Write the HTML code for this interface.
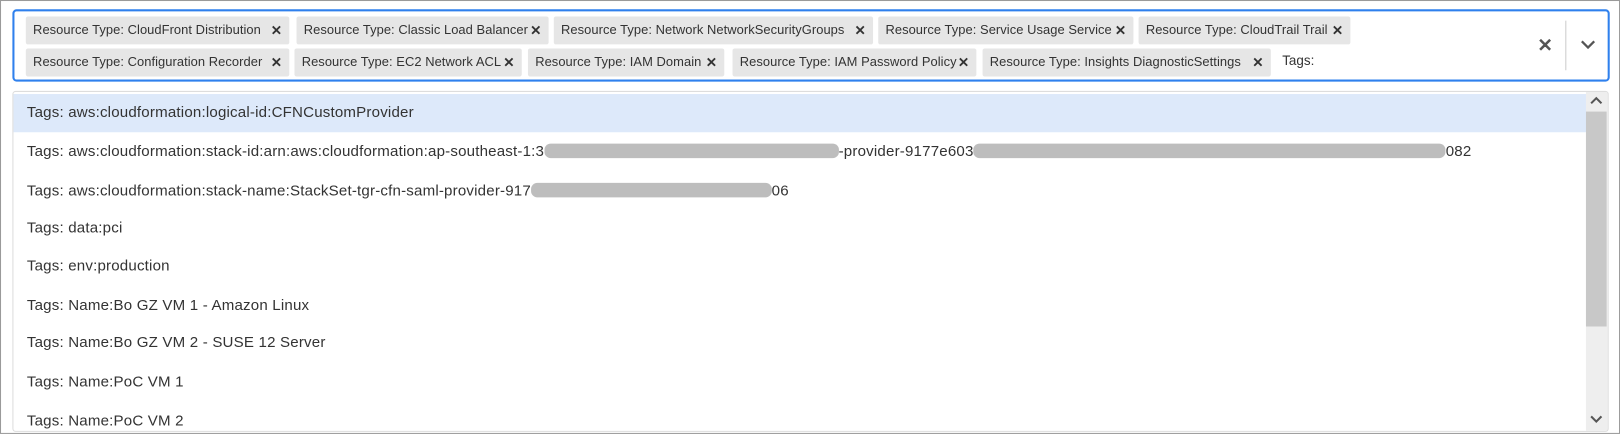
<!DOCTYPE html>
<html><head><style>
*{box-sizing:border-box;margin:0;padding:0}
body{width:1620px;height:434px;background:#fff;font-family:"Liberation Sans",sans-serif;position:relative;overflow:hidden}
.wrap{position:absolute;left:0;top:0;width:1568px;height:420px;transform:scale(1.0332);transform-origin:0 0;border:1px solid #9a9a9a}
.box{position:absolute;left:11px;top:8px;width:1546px;height:70px;border:2px solid #2f80ed;border-radius:4px}
.chip{position:absolute;height:27px;background:#e6e6e6;border-radius:2px;font-size:12.5px;letter-spacing:0.05px;color:#333;line-height:27px;padding-left:7px;white-space:nowrap}
.chip b{position:absolute;right:7px;top:0;font-size:13px;color:#333}
.tagl{position:absolute;left:1240px;top:50px;font-size:13px;color:#333}
.clr{position:absolute;left:1487px;top:33px;font-size:18px;color:#555;font-weight:bold}
.sep{position:absolute;left:1514px;top:19px;width:1px;height:48px;background:#ccc}
.list{position:absolute;left:11px;top:87px;width:1545px;height:330px;border:1px solid #ddd;border-radius:3px;overflow:hidden}
.it{position:absolute;left:0;width:1524px;height:37px;font-size:14.6px;letter-spacing:0.18px;color:#333;line-height:37px;padding-left:13px;white-space:nowrap}
.hl{background:#dde9fa}
.sb{position:absolute;right:0;top:0;width:21px;height:100%;background:#eee}
.th{position:absolute;left:0;top:19px;width:20px;height:208px;background:#c8c8c8}
.bl{display:inline-block;height:14px;background:#bdbdbd;border-radius:6px;vertical-align:-2px}
</style></head><body>
<div class="wrap">
<div class="box">
<div class="chip" style="left:11px;top:5px;width:255px">Resource Type: CloudFront Distribution<b>✕</b></div>
<div class="chip" style="left:273px;top:5px;width:244px">Resource Type: Classic Load Balancer<b>✕</b></div>
<div class="chip" style="left:522px;top:5px;width:309px">Resource Type: Network NetworkSecurityGroups<b>✕</b></div>
<div class="chip" style="left:836px;top:5px;width:247px">Resource Type: Service Usage Service<b>✕</b></div>
<div class="chip" style="left:1088px;top:5px;width:205px">Resource Type: CloudTrail Trail<b>✕</b></div>
<div class="chip" style="left:11px;top:36px;width:255px">Resource Type: Configuration Recorder<b>✕</b></div>
<div class="chip" style="left:271px;top:36px;width:220px">Resource Type: EC2 Network ACL<b>✕</b></div>
<div class="chip" style="left:497px;top:36px;width:190px">Resource Type: IAM Domain<b>✕</b></div>
<div class="chip" style="left:695px;top:36px;width:236px">Resource Type: IAM Password Policy<b>✕</b></div>
<div class="chip" style="left:937px;top:36px;width:279px">Resource Type: Insights DiagnosticSettings<b>✕</b></div>
</div>
<div class="tagl">Tags:</div>
<div class="clr">✕</div>
<div class="sep"></div>
<svg style="position:absolute;left:1528px;top:37px" width="16" height="10"><path d="M2 2 L8 8 L14 2" stroke="#555" stroke-width="2.2" fill="none"/></svg>
<div class="list">
<div class="it hl" style="top:2px">Tags: aws:cloudformation:logical-id:CFNCustomProvider</div>
<div class="it" style="top:40px">Tags: aws:cloudformation:stack-id:arn:aws:cloudformation:ap-southeast-1:3<span class="bl" style="width:285px"></span>-provider-9177e603<span class="bl" style="width:457px"></span>082</div>
<div class="it" style="top:78px">Tags: aws:cloudformation:stack-name:StackSet-tgr-cfn-saml-provider-917<span class="bl" style="width:233px"></span>06</div>
<div class="it" style="top:114px">Tags: data:pci</div>
<div class="it" style="top:151px">Tags: env:production</div>
<div class="it" style="top:189px">Tags: Name:Bo GZ VM 1 - Amazon Linux</div>
<div class="it" style="top:225px">Tags: Name:Bo GZ VM 2 - SUSE 12 Server</div>
<div class="it" style="top:263px">Tags: Name:PoC VM 1</div>
<div class="it" style="top:301px">Tags: Name:PoC VM 2</div>
<div class="sb"><div class="th"></div>
<svg style="position:absolute;left:4px;top:4px" width="12" height="8"><path d="M1 7 L6 2 L11 7" stroke="#555" stroke-width="2" fill="none"/></svg>
<svg style="position:absolute;left:4px;top:313px" width="12" height="8"><path d="M1 1 L6 6 L11 1" stroke="#555" stroke-width="2" fill="none"/></svg>
</div>
</div>
</div>
</body></html>
